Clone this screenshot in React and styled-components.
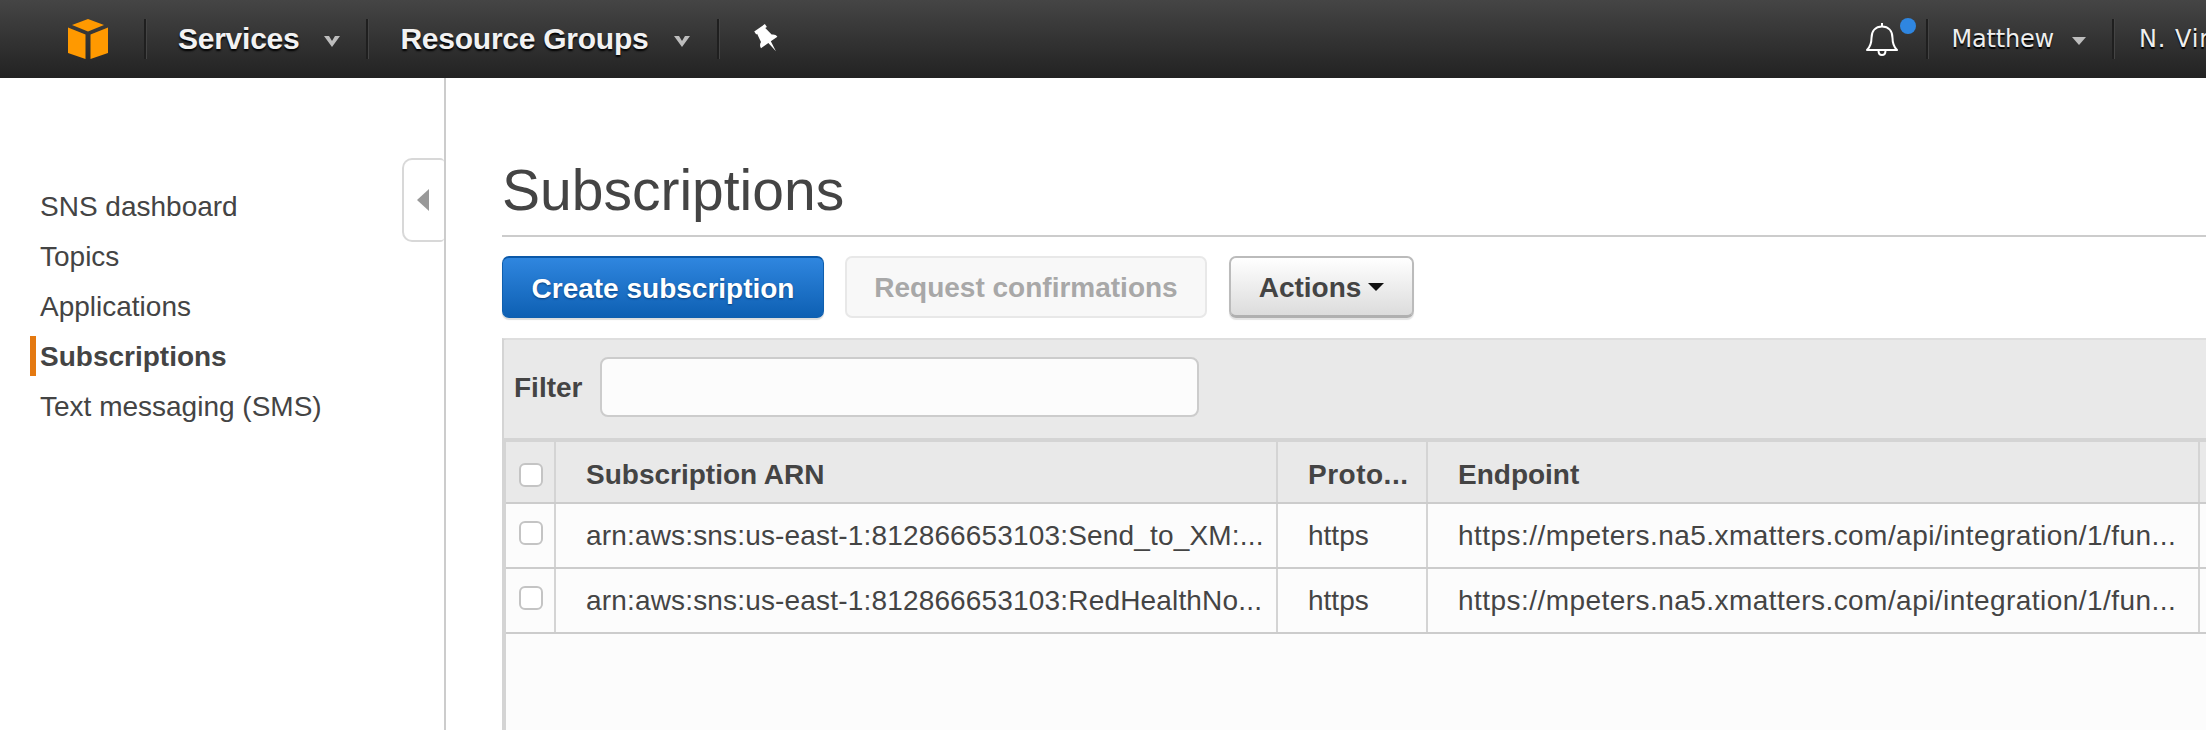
import React from "react";
import styled, { createGlobalStyle } from "styled-components";

const Global = createGlobalStyle`
  html, body { margin: 0; padding: 0; background: #fff; overflow: hidden; }
  * { box-sizing: border-box; }
  body { font-family: "Liberation Sans", Arial, sans-serif; color: #444; }
`;
const Page = styled.div`width: 2206px; height: 730px; display: flex; flex-direction: column; overflow: hidden;`;
const Nav = styled.header`
  height: 78px; flex: none; display: flex; align-items: center; overflow: hidden;
  background: linear-gradient(#454545, #222222);
  padding-left: 68px;
`;
const Sep = styled.span`
  width: 3px; height: 40px; flex: none; background: #1f1f1f; border-right: 1px solid #444;
  margin-left: ${p => p.$l || 0}px; margin-right: ${p => p.$r || 0}px;
`;
const NavTitle = styled.span`
  font-size: 30px; font-weight: 700; color: #f2f2f2; letter-spacing: -0.25px;
  text-shadow: 0 2px 2px #000; white-space: nowrap;
`;
const Chevron = styled.svg`width: 18px; height: 12px; flex: none; margin-left: ${p => p.$l}px; margin-top: 3px;`;
const UserText = styled.span`
  font-family: "DejaVu Sans", sans-serif; font-size: 24px; color: #eee; white-space: nowrap;
  text-shadow: 0 2px 1px #000; letter-spacing: ${p => (p.$clip ? 0.9 : -0.2)}px; flex: none;
  ${p => p.$clip && `width: ${p.$clip}px; overflow: hidden;`}
`;
const Spacer = styled.div`flex: 1;`;
const BellWrap = styled.div`position: relative; width: 32px; height: 34px; flex: none; margin-right: 28px;`;
const Dot = styled.span`
  position: absolute; left: 34px; top: -4px; width: 16px; height: 16px; border-radius: 50%; background: #2f86e0;
`;
const Content = styled.div`flex: 1; display: flex; min-height: 0;`;
const Sidebar = styled.aside`
  position: relative; width: 446px; flex: none; border-right: 2px solid #ccc; padding-top: 104px;
`;
const SideItem = styled.div`
  height: 50px; line-height: 50px; padding-left: 40px; font-size: 28px; color: #444; position: relative;
  font-weight: ${p => (p.$active ? 700 : 400)};
  ${p => p.$active && `&::before{content:"";position:absolute;left:30px;top:4px;width:6px;height:40px;background:#e47911;}`}
`;
const Collapse = styled.div`
  position: absolute; left: 402px; top: 80px; width: 42px; height: 84px; background: #fff;
  border: 2px solid #d8d8d8; border-right: none; border-radius: 10px 4px 4px 10px;
  display: flex; align-items: center; padding-left: 13px;
  &::before{content:"";width:0;height:0;border-top:11px solid transparent;border-bottom:11px solid transparent;border-right:12px solid #999;}
`;
const Main = styled.main`flex: 1; min-width: 0; padding-left: 56px; display: flex; flex-direction: column;`;
const Heading = styled.h1`
  margin: 0; height: 159px; padding-top: 80px; border-bottom: 2px solid #ccc;
  font-size: 57px; font-weight: 400; line-height: 64px; color: #444;
`;
const Toolbar = styled.div`display: flex; margin-top: 19px; height: 63px;`;
const Btn = styled.div`
  height: 62px; border-radius: 7px; display: flex; align-items: center; justify-content: center; padding-top: 2px;
  font-size: 28px; font-weight: 700; width: ${p => p.$w}px; margin-left: ${p => p.$l || 0}px; white-space: nowrap;
`;
const Primary = styled(Btn)`
  color: #fff; background: linear-gradient(#2f86df, #0e60b3); border: 1px solid #0f5fae; border-top: 2px solid #0a58a8;
  box-shadow: 0 2px 1px #ddd; text-shadow: 0 1px 2px #0a3f7a;
`;
const Disabled = styled(Btn)`color: #a8a8a8; background: #f8f8f8; border: 2px solid #e8e8e8;`;
const Secondary = styled(Btn)`
  color: #444; background: linear-gradient(#fff, #dcdcdc); border: 2px solid #bbb; border-bottom: 3px solid #b0b0b0; gap: 7px;
  box-shadow: 0 2px 1px #e4e4e4;
`;
const Caret = styled.span`width: 0; height: 0; border-left: 8px solid transparent; border-right: 8px solid transparent; border-top: 8px solid #111; margin-top: -2px;`;
const Panel = styled.section`
  margin-top: 19px; flex: 1; display: flex; flex-direction: column; min-height: 0;
  border-left: 4px solid #d4d4d4; border-top: 2px solid #dedede;
  background: #fcfcfc;
`;
const FilterBar = styled.div`
  height: 102px; flex: none; background: #e9e9e9; display: flex; align-items: center; padding-left: 10px;
  border-bottom: 4px solid #d4d4d4; margin-left: -2px; padding-bottom: 4px;
`;
const FilterLabel = styled.label`font-size: 28px; font-weight: 700; color: #444; width: 86px; padding-top: 2px;`;
const FilterInput = styled.div`
  width: 599px; height: 60px; background: #fcfcfc; border: 2px solid #ccc; border-radius: 8px;
`;
const Row = styled.div`
  display: flex; flex: none; height: ${p => p.$h}px; background: ${p => (p.$head ? "#e9e9e9" : "#fcfcfc")};
  border-bottom: 2px solid #ccc;
`;
const Cell = styled.div`
  width: ${p => p.$w}px; flex: none; border-right: 2px solid #d4d4d4; display: flex; align-items: center;
  padding-left: ${p => p.$pl}px; font-size: 28px; white-space: nowrap; overflow: hidden;
  padding-top: ${p => (p.$head ? 6 : 0)}px;
  font-weight: ${p => (p.$head ? 700 : 400)}; color: #444; letter-spacing: ${p => p.$ls || 0}px;
`;
const Check = styled.span`
  width: 24px; height: 24px; border: 2px solid #c4c4c4; border-radius: 6px; background: #fff; display: block;
  margin-top: ${p => p.$m}px;
`;

const Chev = ({ l }) => (
  <Chevron $l={l} viewBox="0 0 18 12"><path d="M1 1h5l3 5 3-5h5L9 12z" fill="#bdbdbd" /></Chevron>
);
const rows = [
  ["arn:aws:sns:us-east-1:812866653103:Send_to_XM:...", 65],
  ["arn:aws:sns:us-east-1:812866653103:RedHealthNo...", 65],
];

export default function App() {
  return (
    <Page>
      <Global />
      <Nav>
        <svg width="40" height="40" viewBox="0 0 40 40" style={{ flex: "none" }}>
          <path d="M20 0l16 6-16 6.5L4 6z" fill="#ff9900" />
          <path d="M0 8.5l17.5 7V40L0 34zM40 8.5l-17.5 7V40L40 34z" fill="#ff9900" />
        </svg>
        <Sep $l={36} $r={31} />
        <NavTitle>Services</NavTitle>
        <Chev l={24} />
        <Sep $l={25} $r={31} />
        <NavTitle>Resource Groups</NavTitle>
        <Chev l={25} />
        <Sep $l={26} $r={34} />
        <svg width="28" height="30" viewBox="0 0 28 30" style={{ flex: "none" }}>
          <g transform="rotate(-35 14 15)" fill="#fff">
            <path d="M7 1h13v3.500h-2l1.500 9c2.200 1 3.500 2.700 3.500 5H15l-1.500 11-1.500-11H3c0-2.300 1.300-4 3.500-5L8 4.500H7z" />
          </g>
        </svg>
        <Spacer />
        <BellWrap>
          <svg width="32" height="34" viewBox="0 0 32 34" fill="none" stroke="#fff" strokeWidth="2" strokeLinejoin="round">
            <path d="M1 28c3-3 4.500-6 4.500-12C5.500 9 9.500 4.500 16 4.500S26.500 9 26.500 16c0 6 1.500 9 4.500 12z" />
            <path d="M16 1v3.500M12.500 28.500c0 6 7 6 7 0" />
          </svg>
          <Dot />
        </BellWrap>
        <Sep $r={23} />
        <UserText>Matthew</UserText>
        <svg width="14" height="8" viewBox="0 0 14 8" style={{ flex: "none", marginLeft: 18, marginTop: 3 }}><path d="M0 0h14L7 8z" fill="#bdbdbd" /></svg>
        <Sep $l={26} $r={24} />
        <UserText $clip={67}>N. Virginia</UserText>
      </Nav>
      <Content>
        <Sidebar>
          <Collapse />
          <SideItem>SNS dashboard</SideItem>
          <SideItem>Topics</SideItem>
          <SideItem>Applications</SideItem>
          <SideItem $active>Subscriptions</SideItem>
          <SideItem>Text messaging (SMS)</SideItem>
        </Sidebar>
        <Main>
          <Heading>Subscriptions</Heading>
          <Toolbar>
            <Primary $w={322}>Create subscription</Primary>
            <Disabled $w={362} $l={21}>Request confirmations</Disabled>
            <Secondary $w={185} $l={22}>Actions<Caret /></Secondary>
          </Toolbar>
          <Panel>
            <FilterBar>
              <FilterLabel>Filter</FilterLabel>
              <FilterInput />
            </FilterBar>
            <Row $h={62} $head>
              <Cell $w={50} $pl={13}><Check $m={5} /></Cell>
              <Cell $w={722} $pl={30} $head>Subscription ARN</Cell>
              <Cell $w={150} $pl={30} $ls={0.5} $head>Proto...</Cell>
              <Cell $w={772} $pl={30} $head>Endpoint</Cell>
            </Row>
            {rows.map(([arn, h]) => (
              <Row key={arn} $h={h}>
                <Cell $w={50} $pl={13}><Check $m={-6} /></Cell>
                <Cell $w={722} $pl={30} $ls={0.17}>{arn}</Cell>
                <Cell $w={150} $pl={30}>https</Cell>
                <Cell $w={772} $pl={30} $ls={0.45}>https://mpeters.na5.xmatters.com/api/integration/1/fun...</Cell>
              </Row>
            ))}
          </Panel>
        </Main>
      </Content>
    </Page>
  );
}
